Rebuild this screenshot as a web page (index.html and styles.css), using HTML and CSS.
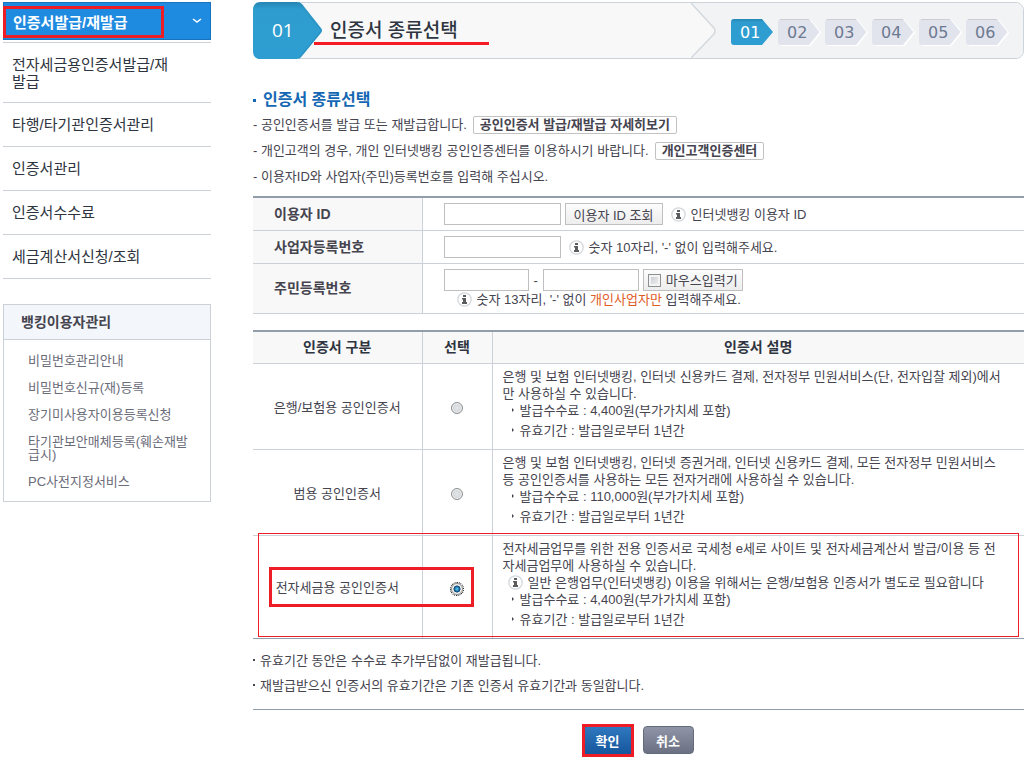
FILE: index.html
```html
<!DOCTYPE html>
<html lang="ko">
<head>
    <meta charset="utf-8">
    <title>인증서 종류선택</title>
    <link rel="stylesheet" href="styles.css">
</head>
<body>
    <svg class="defs" width="0" height="0">
        <symbol id="info" viewBox="0 0 15 15">
            <circle cx="7.5" cy="7.5" r="6.7" fill="#fff" stroke="#d3d8dc" stroke-width="1.3"/>
            <path d="M6 3h3v2H6zM5 6h4v4h1v2H5v-2h1V7.500H5z" fill="#5b5c5e"/>
        </symbol>
        <symbol id="step" viewBox="0 0 43 27">
            <path d="M3 1.500H32L42 13.500L32 26H3" fill="none" stroke="#fff" stroke-width="2"/>
            <path d="M3 0H31L41.500 13L31 26H3Q0 26 0 23V3Q0 0 3 0z" fill="#e2e4ed"/>
            <path d="M2 .5H31" stroke="#cccdd5"/>
        </symbol>
    </svg>

    <div class="page">
        <div class="sidebar">
            <button type="button" class="menu-title">
                <span>인증서발급/재발급</span>
                <svg width="10" height="6" viewBox="0 0 10 6"><path d="M1 1l4 3 4-3" fill="none" stroke="#fff" stroke-width="1.500"/></svg>
                <span class="mark mark-menu"></span>
            </button>
            <ul class="menu">
                <li class="tall"><a href="#">전자세금용인증서발급/재<br>발급</a></li>
                <li><a href="#">타행/타기관인증서관리</a></li>
                <li><a href="#">인증서관리</a></li>
                <li><a href="#">인증서수수료</a></li>
                <li><a href="#">세금계산서신청/조회</a></li>
            </ul>
            <div class="box">
                <h2>뱅킹이용자관리</h2>
                <ul>
                    <li><a href="#">비밀번호관리안내</a></li>
                    <li><a href="#">비밀번호신규(재)등록</a></li>
                    <li><a href="#">장기미사용자이용등록신청</a></li>
                    <li><a href="#">타기관보안매체등록(훼손재발<br>급시)</a></li>
                    <li><a href="#">PC사전지정서비스</a></li>
                </ul>
            </div>
        </div>

        <div class="content">
            <div class="step-bar">
                <div class="step-now">
                    <svg width="70" height="57" viewBox="0 0 70 57">
                        <defs>
                            <linearGradient id="blue" x1="0" y1="0" x2="0" y2="1">
                                <stop offset="0" stop-color="#2585b3"/>
                                <stop offset=".12" stop-color="#2e9ccf"/>
                                <stop offset="1" stop-color="#2e9ed2"/>
                            </linearGradient>
                        </defs>
                        <path d="M8 0H44Q47 0 49 2L68 26Q70 28.500 68 31L49 54Q47 57 44 57H8Q0 57 0 49V8Q0 0 8 0z" fill="url(#blue)"/>
                        <path d="M46 .5L68.500 28.500L46 56.500" fill="none" stroke="#2c8db9"/>
                    </svg>
                    <span>01</span>
                </div>
                <h1>인증서 종류선택<span class="mark-line"></span></h1>
                <svg class="chevron" width="26" height="55" viewBox="0 0 26 55">
                    <path d="M0 0L23 25Q25 28 23 31L0 55H26V0z" fill="#f2f3f5"/>
                    <path d="M0 0L23 25Q25 28 23 31L0 55" fill="none" stroke="#d3d9de" stroke-width="1.500"/>
                </svg>
                <ol class="steps">
                    <li class="on">
                        <svg width="43" height="27" viewBox="0 0 43 27"><path d="M3 0H31L42 13L31 26H3Q0 26 0 23V3Q0 0 3 0z" fill="url(#blue)"/></svg>
                        <span>01</span>
                    </li>
                    <li><svg width="43" height="27"><use href="#step"/></svg><span>02</span></li>
                    <li><svg width="43" height="27"><use href="#step"/></svg><span>03</span></li>
                    <li><svg width="43" height="27"><use href="#step"/></svg><span>04</span></li>
                    <li><svg width="43" height="27"><use href="#step"/></svg><span>05</span></li>
                    <li><svg width="43" height="27"><use href="#step"/></svg><span>06</span></li>
                </ol>
            </div>

            <h2 class="title">인증서 종류선택</h2>
            <ul class="guide">
                <li>- 공인인증서를 발급 또는 재발급합니다. <a class="link-btn" href="#">공인인증서 발급/재발급 자세히보기</a></li>
                <li>- 개인고객의 경우, 개인 인터넷뱅킹 공인인증센터를 이용하시기 바랍니다. <a class="link-btn" href="#">개인고객인증센터</a></li>
                <li>- 이용자ID와 사업자(주민)등록번호를 입력해 주십시오.</li>
            </ul>

            <form>
                <table class="form-table">
                    <tr>
                        <th><label for="user_id">이용자 ID</label></th>
                        <td>
                            <div class="field">
                                <input type="text" id="user_id">
                                <button type="button" class="gray-btn">이용자 ID 조회</button>
                                <span class="info"><svg width="15" height="15"><use href="#info"/></svg>인터넷뱅킹 이용자 ID</span>
                            </div>
                        </td>
                    </tr>
                    <tr>
                        <th><label for="biz_no">사업자등록번호</label></th>
                        <td>
                            <div class="field">
                                <input type="text" id="biz_no">
                                <span class="info">
                                    <svg width="15" height="15"><use href="#info"/></svg>숫자 10자리, '-' 없이 입력해주세요.
                                </span>
                            </div>
                        </td>
                    </tr>
                    <tr>
                        <th><label for="jumin1">주민등록번호</label></th>
                        <td>
                            <div class="field">
                                <input type="text" id="jumin1" class="short">
                                <span class="dash">-</span>
                                <input type="password" id="jumin2" class="mid" aria-label="주민등록번호 뒷자리">
                                <label class="gray-btn mouse"><input type="checkbox">마우스입력기</label>
                            </div>
                            <p class="info under">
                                <svg width="15" height="15"><use href="#info"/></svg>
                                <span>숫자 13자리, '-' 없이 <em>개인사업자만</em> 입력해주세요.</span>
                            </p>
                        </td>
                    </tr>
                </table>

                <table class="cert-table">
                    <thead>
                        <tr>
                            <th class="col-name">인증서 구분</th>
                            <th class="col-pick">선택</th>
                            <th>인증서 설명</th>
                        </tr>
                    </thead>
                    <tbody>
                        <tr>
                            <td><label for="cert1">은행/보험용 공인인증서</label></td>
                            <td><input type="radio" name="cert" id="cert1"></td>
                            <td class="desc">
                                은행 및 보험 인터넷뱅킹, 인터넷 신용카드 결제, 전자정부 민원서비스(단, 전자입찰 제외)에서<br>만 사용하실 수 있습니다.
                                <ul>
                                    <li>발급수수료 : 4,400원(부가가치세 포함)</li>
                                    <li>유효기간 : 발급일로부터 1년간</li>
                                </ul>
                            </td>
                        </tr>
                        <tr>
                            <td><label for="cert2">범용 공인인증서</label></td>
                            <td><input type="radio" name="cert" id="cert2"></td>
                            <td class="desc">
                                은행 및 보험 인터넷뱅킹, 인터넷 증권거래, 인터넷 신용카드 결제, 모든 전자정부 민원서비스<br>등 공인인증서를 사용하는 모든 전자거래에 사용하실 수 있습니다.
                                <ul>
                                    <li>발급수수료 : 110,000원(부가가치세 포함)</li>
                                    <li>유효기간 : 발급일로부터 1년간</li>
                                </ul>
                            </td>
                        </tr>
                        <tr class="picked">
                            <td>
                                <label for="cert3">전자세금용 공인인증서</label>
                                <span class="mark-row"></span>
                                <span class="mark mark-pick"></span>
                            </td>
                            <td><input type="radio" name="cert" id="cert3" checked></td>
                            <td class="desc">
                                전자세금업무를 위한 전용 인증서로 국세청 e세로 사이트 및 전자세금계산서 발급/이용 등 전<br>자세금업무에 사용하실 수 있습니다.
                                <p class="info"><svg width="15" height="15"><use href="#info"/></svg>일반 은행업무(인터넷뱅킹) 이용을 위해서는 은행/보험용 인증서가 별도로 필요합니다</p>
                                <ul>
                                    <li>발급수수료 : 4,400원(부가가치세 포함)</li>
                                    <li>유효기간 : 발급일로부터 1년간</li>
                                </ul>
                            </td>
                        </tr>
                    </tbody>
                </table>

                <ul class="notes">
                    <li>유효기간 동안은 수수료 추가부담없이 재발급됩니다.</li>
                    <li>재발급받으신 인증서의 유효기간은 기존 인증서 유효기간과 동일합니다.</li>
                </ul>

                <div class="buttons">
                    <button type="submit" class="ok">확인</button>
                    <button type="button" class="cancel">취소</button>
                </div>
            </form>
        </div>
    </div>
</body>
</html>
```
FILE: styles.css
```css
* {
    box-sizing: border-box;
}

body {
    margin: 0;
    background-color: #fff;
    color: #45444f;
    font-family: "Liberation Sans", "Noto Sans CJK KR", sans-serif;
    font-size: 13px;
    line-height: 17px;
}

h1, h2, p, ul, ol {
    margin: 0;
    padding: 0;
}

ul, ol {
    list-style: none;
}

a {
    color: inherit;
    text-decoration: none;
}

button, input {
    font-family: inherit;
    font-size: 13px;
    color: inherit;
    margin: 0;
}

.defs {
    position: absolute;
}

.page {
    display: flex;
    gap: 42px;
    padding: 2px 0 0 3px;
}

/* red highlight frames */
.mark {
    position: absolute;
    border: 3px solid #ee1c25;
    pointer-events: none;
}

/* left menu */
.sidebar {
    flex: 0 0 208px;
}

.menu-title {
    position: relative;
    display: flex;
    justify-content: space-between;
    align-items: center;
    width: 100%;
    height: 38px;
    padding: 0 8px 0 9px;
    border: 1px solid #1973bd;
    background-color: #1e8ae0;
    color: #fff;
    font-size: 15px;
    font-weight: bold;
}

.mark-menu {
    left: -1px;
    top: 3px;
    width: 161px;
    height: 32px;
}

.menu {
    margin-top: 2px;
    border-top: 1px solid #cbd1d7;
    color: #2e3440;
    font-size: 15px;
}

.menu li {
    display: flex;
    align-items: center;
    height: 44px;
    padding-left: 9px;
    border-bottom: 1px solid #cbd1d7;
}

.menu .tall {
    height: 60px;
}

.box {
    margin-top: 25px;
    border: 1px solid #cbd1d7;
}

.box h2 {
    padding: 8px 17px;
    border-bottom: 1px solid #cbd1d7;
    background-color: #f3f6fb;
    font-size: 14px;
    line-height: 18px;
}

.box ul {
    display: flex;
    flex-direction: column;
    gap: 14px;
    padding: 14px 0 13px 24px;
    color: #6b6c79;
    line-height: 13px;
}

/* top step bar */
.content {
    flex: 1;
    min-width: 0;
}

.step-bar {
    display: flex;
    height: 57px;
    border: 1px solid #ccd3da;
    border-radius: 8px;
    background-color: #f8f8f8;
}

.step-now {
    position: relative;
    width: 70px;
    height: 57px;
    margin: -1px 0 0 -1px;
    color: #fff;
    font-family: "Open Sans", sans-serif;
    font-size: 19px;
}

.step-now span {
    position: absolute;
    left: 19px;
    top: 20px;
}

.step-bar h1 {
    position: relative;
    flex: 1;
    padding-left: 7px;
    color: #2e3440;
    font-size: 19px;
    font-weight: 500;
    line-height: 55px;
}

.mark-line {
    position: absolute;
    left: -9px;
    top: 39px;
    width: 175px;
    height: 3px;
    background-color: #f41b24;
}

.steps {
    display: flex;
    align-items: center;
    gap: 4px;
    padding: 4px 14px 0 14px;
    border-radius: 0 8px 8px 0;
    background-color: #f2f3f5;
}

.steps li {
    position: relative;
    height: 27px;
    color: #6d7a91;
    font-family: "DejaVu Sans", sans-serif;
    font-size: 16px;
}

.steps span {
    position: absolute;
    left: 9px;
    top: 5px;
}

.steps .on {
    color: #fff;
}

/* guide text */
.title {
    display: flex;
    align-items: center;
    gap: 7px;
    margin-top: 31px;
    color: #1467b3;
    font-size: 16px;
    line-height: 20px;
}

.title::before {
    content: "";
    width: 3px;
    height: 3px;
    background-color: #1467b3;
}

.guide {
    margin-top: 2px;
    line-height: 26px;
}

.guide li {
    display: flex;
    align-items: center;
    gap: 6px;
    height: 26px;
}

.link-btn {
    padding: 0 6px;
    border: 1px solid #c2c2c2;
    border-radius: 2px;
    font-weight: bold;
    line-height: 16px;
}

/* tables */
table {
    width: 100%;
    border-collapse: collapse;
}

.form-table {
    margin-top: 6px;
    border-top: 2px solid #929dab;
}

.form-table th, .form-table td {
    padding: 5px 0 5px 21px;
    border-bottom: 1px solid #cbd1d7;
    text-align: left;
}

.form-table th {
    width: 169px;
    border-right: 1px solid #cbd1d7;
    background-color: #f8f8f8;
    font-size: 14px;
}

.field {
    display: flex;
    align-items: center;
    gap: 4px;
}

.field input[type="text"],
.field input[type="password"] {
    width: 117px;
    height: 22px;
    padding: 0 4px;
    border: 1px solid #bfbfbf;
    background-color: #fff;
}

.field input.short {
    width: 85px;
}

.field input.mid {
    width: 96px;
}

.dash {
    padding: 0 1px;
}

.gray-btn {
    height: 22px;
    padding: 0 8px;
    border: 1px solid #bfbfbf;
    background: linear-gradient(#fcfcfc, #ededed);
}

.mouse {
    display: flex;
    align-items: center;
    gap: 5px;
    padding: 0 4px;
}

.mouse input {
    appearance: none;
    width: 13px;
    height: 13px;
    border: 1px solid #8e8f8f;
    background: linear-gradient(135deg, #c4c8cd, #f4f4f4);
    box-shadow: inset 0 0 0 2px #f4f4f4;
}

.info {
    display: flex;
    align-items: center;
    gap: 5px;
}

.field .info {
    margin-left: 4px;
}

.under {
    margin-left: 13px;
}

.info em {
    color: #e05a26;
    font-style: normal;
}

.cert-table {
    margin-top: 16px;
    border-top: 2px solid #929dab;
    border-bottom: 1px solid #929dab;
}

.cert-table th, .cert-table td {
    border-bottom: 1px solid #cbd1d7;
    border-right: 1px solid #cbd1d7;
    text-align: center;
}

.cert-table th:last-child, .cert-table td:last-child {
    border-right: 0;
}

.cert-table tr:last-child td {
    border-bottom-color: #929dab;
}

.cert-table th {
    height: 32px;
    padding: 0;
    background-color: #f8f8f8;
    color: #2e3440;
    font-size: 14px;
}

.cert-table td {
    padding: 4px 0 2px;
}

.cert-table .col-name {
    width: 169px;
}

.cert-table .col-pick {
    width: 70px;
}

.cert-table .desc {
    padding: 4px 0 10px 10px;
    text-align: left;
    white-space: nowrap;
}

.desc li {
    display: flex;
    align-items: center;
    gap: 6px;
    padding-left: 9px;
}

.desc li + li {
    margin-top: 3px;
}

.desc li::before {
    content: "";
    border-left: 2px solid #45444f;
    border-top: 2px solid transparent;
    border-bottom: 2px solid transparent;
}

.desc .info {
    padding-left: 5px;
}

.cert-table input {
    appearance: none;
    width: 12px;
    height: 12px;
    border: 1px solid #8e8f8f;
    border-radius: 50%;
    background: radial-gradient(#e4e6e8, #c9cdd1);
    box-shadow: inset 0 0 0 1px #f4f4f4;
    vertical-align: middle;
}

.cert-table input:checked {
    background: radial-gradient(circle closest-side, #6fd0f5 0, #1a7db5 40%, #0d3659 65%, #e4e6e8 75%);
    outline: 1px dotted #000;
}

.picked {
    position: relative;
}

.mark-row {
    position: absolute;
    left: 5px;
    right: 5px;
    top: -2px;
    bottom: 1px;
    border: 1px solid #ee1c25;
    pointer-events: none;
}

.mark-pick {
    left: 16px;
    top: 32px;
    width: 205px;
    height: 40px;
}

/* bottom notes and buttons */
.notes {
    padding: 9px 0 11px;
    border-bottom: 1px solid #929dab;
    line-height: 25px;
}

.notes li {
    display: flex;
    align-items: center;
    gap: 5px;
}

.notes li::before {
    content: "";
    width: 2px;
    height: 2px;
    background-color: #45444f;
}

.buttons {
    display: flex;
    justify-content: center;
    align-items: center;
    gap: 9px;
    padding: 14px 2px 0 0;
}

.buttons button {
    color: #fff;
    font-weight: bold;
}

.ok {
    width: 52px;
    height: 33px;
    padding: 0;
    border: 3px solid #ee1c25;
    background: linear-gradient(#2f78bf, #16569d);
}

.cancel {
    width: 51px;
    height: 28px;
    padding: 0;
    border: 1px solid #666b7c;
    border-radius: 4px;
    background: linear-gradient(#8f95a6, #6b7183);
}
```
